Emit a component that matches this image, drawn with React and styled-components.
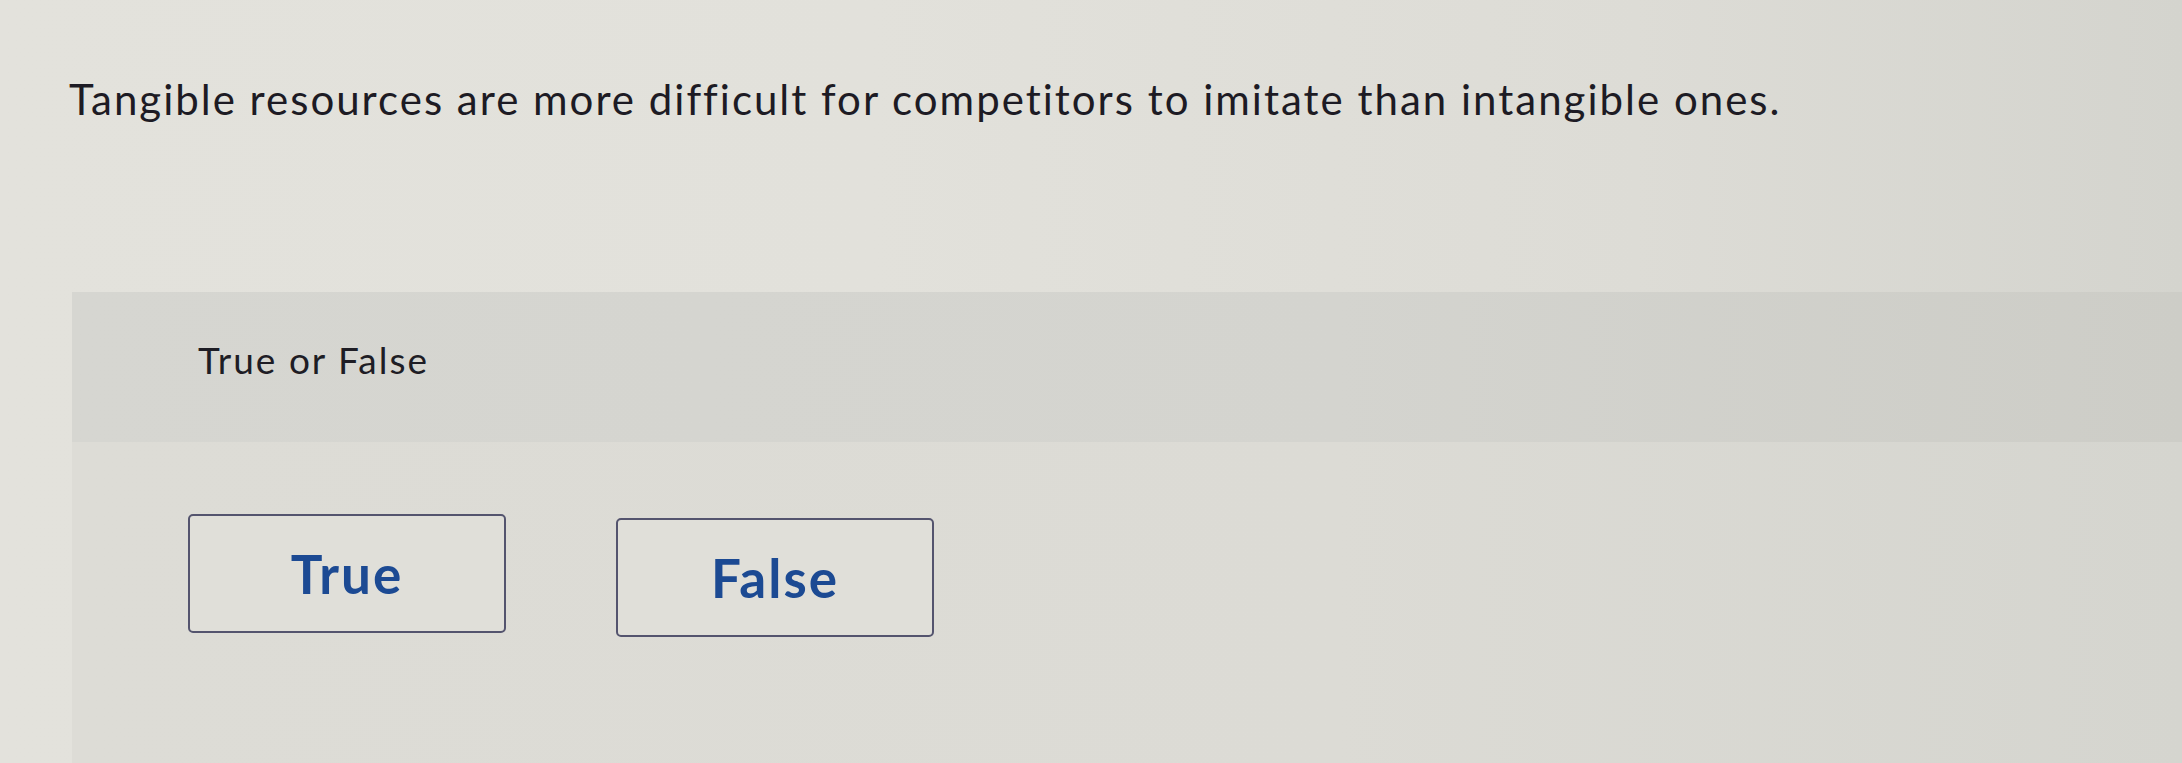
import React from "react";
import styled, { createGlobalStyle } from "styled-components";

const Global = createGlobalStyle`
  html, body {
    margin: 0;
    padding: 0;
    height: 100%;
    overflow: hidden;
  }
  body {
    font-family: Lato, "Open Sans", "Liberation Sans", sans-serif;
    background: #dedcd6;
  }
`;

const Page = styled.main`
  width: 2182px;
  height: 763px;
  box-sizing: border-box;
  padding-top: 74px;
  background: linear-gradient(90deg, #e3e2dc 0%, #e2e1db 40%, #dddcd6 75%, #d4d4ce 100%);
  overflow: hidden;
`;

const Prompt = styled.h1`
  margin: 0 0 0 69px;
  font-size: 42px;
  line-height: 50px;
  font-weight: 400;
  color: #1d1b24;
  letter-spacing: 2px;
`;

const Panel = styled.section`
  margin: 168px 0 0 72px;
  background: linear-gradient(90deg, #dddcd6 0%, #dcdbd5 60%, #d5d5cf 100%);
  min-height: 480px;
`;

const PanelHeader = styled.div`
  height: 150px;
  box-sizing: border-box;
  padding: 46px 0 0 126px;
  background: linear-gradient(90deg, #d6d6d1 0%, #d4d4cf 60%, #cdcdc7 100%);
`;

const PanelTitle = styled.span`
  font-size: 37px;
  line-height: 44px;
  letter-spacing: 2px;
  color: #1e1d25;
`;

const Choices = styled.div`
  display: flex;
  align-items: flex-start;
  gap: 110px;
  padding: 72px 0 0 116px;
`;

const Choice = styled.button`
  width: 318px;
  height: 119px;
  box-sizing: border-box;
  margin-top: ${(p) => p.$drop || 0}px;
  padding: 0;
  border: 2px solid #54546e;
  border-radius: 5px;
  background: #e0dfd9;
  color: #1c4a93;
  font-family: inherit;
  font-size: 53px;
  font-weight: 700;
  letter-spacing: 2px;
  display: flex;
  align-items: center;
  justify-content: center;
  cursor: pointer;
`;

export default function App() {
  return (
    <>
      <Global />
      <Page>
        <Prompt>
          Tangible resources are more difficult for competitors to imitate than intangible ones.
        </Prompt>
        <Panel>
          <PanelHeader>
            <PanelTitle>True or False</PanelTitle>
          </PanelHeader>
          <Choices>
            <Choice type="button">True</Choice>
            <Choice type="button" $drop={4}>False</Choice>
          </Choices>
        </Panel>
      </Page>
    </>
  );
}
